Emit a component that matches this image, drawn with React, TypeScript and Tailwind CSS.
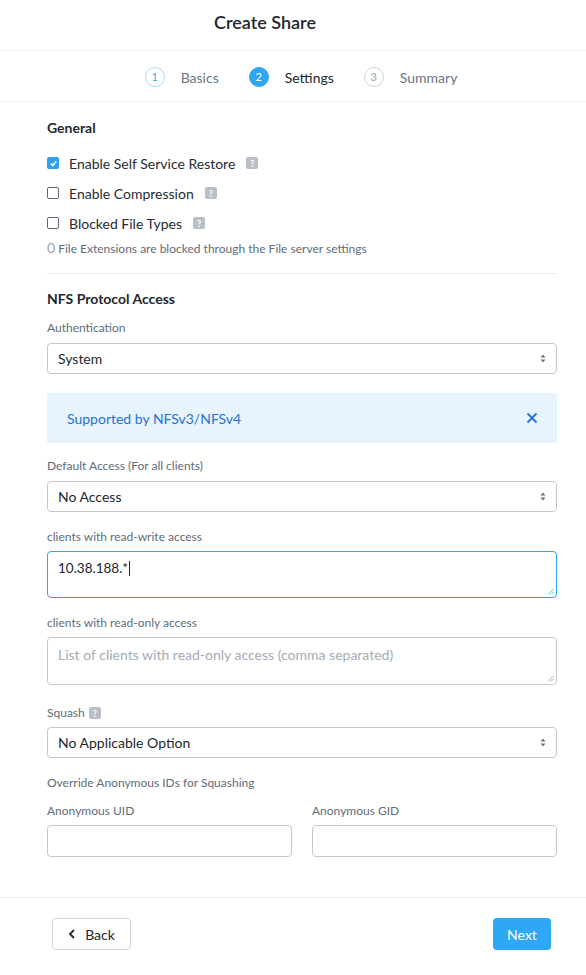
import React from "react";

const font = { fontFamily: "Lato, 'Open Sans', sans-serif" };

function Help({ className = "ml-[11px]" }: { className?: string }) {
  return (
    <span className={`${className} inline-flex h-[12px] w-[12px] items-center justify-center rounded-[2px] bg-[#b8bfc9] text-[9px] font-bold leading-none text-white`}>
      ?
    </span>
  );
}

function Arrows() {
  return (
    <svg width="6" height="9" viewBox="0 0 6 9">
      <path d="M3 0.5L5.5 3.5H0.5Z" fill="#6b7280" />
      <path d="M3 8.5L5.5 5.5H0.5Z" fill="#6b7280" />
    </svg>
  );
}

function Select({ value }: { value: string }) {
  return (
    <div className="flex h-[31px] items-center justify-between rounded-[4px] border border-[#c3c9d1] bg-white px-[10px] text-[14px] text-[#22272e]">
      <span>{value}</span>
      <Arrows />
    </div>
  );
}

function Label({ children, tight }: { children: React.ReactNode; tight?: boolean }) {
  return <div className={`${tight ? "mb-[6px]" : "mb-[7px]"} text-[12px] leading-[16px] text-[#5f6b7a]`}>{children}</div>;
}

function Grip() {
  return (
    <svg width="7" height="7" viewBox="0 0 7 7" className="absolute bottom-[2px] right-[2px]">
      <path d="M6.5 1L1 6.5M6.5 4L4 6.5" stroke="#8a8f96" strokeWidth="0.8" />
    </svg>
  );
}

function Check({ checked, label }: { checked?: boolean; label: string }) {
  return (
    <div className="flex h-[30px] items-center">
      {checked ? (
        <span className="flex h-[12px] w-[12px] items-center justify-center rounded-[2px] bg-[#2f9ff0]">
          <svg width="9" height="9" viewBox="0 0 10 10">
            <path d="M2 5.2L4.2 7.3L8.2 2.6" stroke="white" strokeWidth="1.8" fill="none" />
          </svg>
        </span>
      ) : (
        <span className="h-[12px] w-[12px] rounded-[2px] border border-[#5b6572] bg-white" />
      )}
      <span className="ml-[10px] text-[14px] text-[#262b33]">{label}</span>
      <Help />
    </div>
  );
}

function Step({ n, label, state }: { n: number; label: string; state: "done" | "active" | "todo" }) {
  const circle =
    state === "active"
      ? "bg-[#2ea6f1] text-white border-[#2ea6f1]"
      : state === "done"
        ? "border-[#a8d9f8] text-[#3aa3e6] bg-white"
        : "border-[#cfd4db] text-[#9aa3ad] bg-white";
  return (
    <div className="flex items-center">
      <span className={`flex h-[20px] w-[20px] items-center justify-center rounded-full border text-[11px] ${circle}`}>{n}</span>
      <span className={`ml-[16px] text-[14px] ${state === "active" ? "text-[#22272e]" : "text-[#6b7685]"}`}>{label}</span>
    </div>
  );
}

export default function App() {
  return (
    <div style={font} className="flex h-[975px] w-[586px] flex-col bg-white">
      <div className="flex h-[51px] items-center justify-center border-b border-[#eceef1] pb-[5px] pr-[56px] text-[18px] font-semibold text-[#22272e]">
        Create Share
      </div>
      <div className="flex h-[51px] items-center justify-center gap-[30px] border-b border-[#eceef1] pl-[16px] pt-[2px]">
        <Step n={1} label="Basics" state="done" />
        <Step n={2} label="Settings" state="active" />
        <Step n={3} label="Summary" state="todo" />
      </div>

      <div className="flex-1 pl-[47px] pr-[29px]">
        <div className="mt-[16px] text-[14px] font-bold leading-[20px] text-[#22272e]">General</div>
        <div className="mt-[10px]">
          <Check checked label="Enable Self Service Restore" />
          <Check label="Enable Compression" />
          <Check label="Blocked File Types" />
        </div>
        <div className="mt-[2px] text-[12px] leading-[16px] text-[#5f6b7a]">
          <span className="text-[14px] text-[#9aa3ad]">0</span> File Extensions are blocked through the File server settings
        </div>
        <div className="mt-[16px] border-t border-[#eceef1]" />

        <div className="mt-[15px] text-[14px] font-bold leading-[20px] text-[#22272e]">NFS Protocol Access</div>
        <div className="mt-[11px]">
          <Label>Authentication</Label>
          <Select value="System" />
        </div>
        <div className="mt-[19px] flex h-[50px] items-center justify-between bg-[#e8f4fd] pl-[20px] pr-[19px] text-[14px] text-[#1f73d1]">
          <span>Supported by NFSv3/NFSv4</span>
          <svg width="12" height="12" viewBox="0 0 12 12">
            <path d="M1.5 1.5L10.5 10.5M10.5 1.5L1.5 10.5" stroke="#2b77d0" strokeWidth="2" />
          </svg>
        </div>

        <div className="mt-[15px]">
          <Label>Default Access (For all clients)</Label>
          <Select value="No Access" />
        </div>

        <div className="mt-[17px]">
          <Label tight>clients with read-write access</Label>
          <div className="relative h-[47px] rounded-[4px] border border-[#2ea6f1] px-[10px] pt-[6px] text-[13.5px] text-[#22272e]">
            10.38.188.*<span className="ml-[1px] inline-block h-[15px] w-[1px] translate-y-[3px] bg-[#22272e]" />
            <Grip />
          </div>
        </div>

        <div className="mt-[17px]">
          <Label tight>clients with read-only access</Label>
          <div className="relative h-[48px] rounded-[4px] border border-[#c3c9d1] px-[10px] pt-[6px] text-[14px] text-[#a4acb6]">
            List of clients with read-only access (comma separated)
            <Grip />
          </div>
        </div>

        <div className="mt-[20px]">
          <div className="mb-[6px] flex items-center text-[12px] leading-[16px] text-[#5f6b7a]">
            Squash
            <Help className="ml-[4px]" />
          </div>
          <Select value="No Applicable Option" />
        </div>

        <div className="mt-[17px] text-[12px] leading-[16px] text-[#5f6b7a]">Override Anonymous IDs for Squashing</div>

        <div className="mt-[12px] grid grid-cols-2 gap-[20px]">
          <div>
            <Label tight>Anonymous UID</Label>
            <div className="h-[32px] rounded-[4px] border border-[#c3c9d1]" />
          </div>
          <div>
            <Label tight>Anonymous GID</Label>
            <div className="h-[32px] rounded-[4px] border border-[#c3c9d1]" />
          </div>
        </div>
      </div>

      <div className="flex h-[78px] items-start justify-between border-t border-[#eceef1] pl-[52px] pr-[35px] pt-[20px]">
        <button className="flex h-[32px] w-[79px] items-center justify-center rounded-[4px] border border-[#d3d7dd] bg-white text-[14px] text-[#22272e]">
          <svg width="8" height="10" viewBox="0 0 8 10" className="mr-[9px]">
            <path d="M6 1L2 5L6 9" stroke="#22272e" strokeWidth="1.8" fill="none" />
          </svg>
          Back
        </button>
        <button className="h-[32px] w-[58px] rounded-[4px] bg-[#2ea8f4] text-[14px] text-white">Next</button>
      </div>
    </div>
  );
}
